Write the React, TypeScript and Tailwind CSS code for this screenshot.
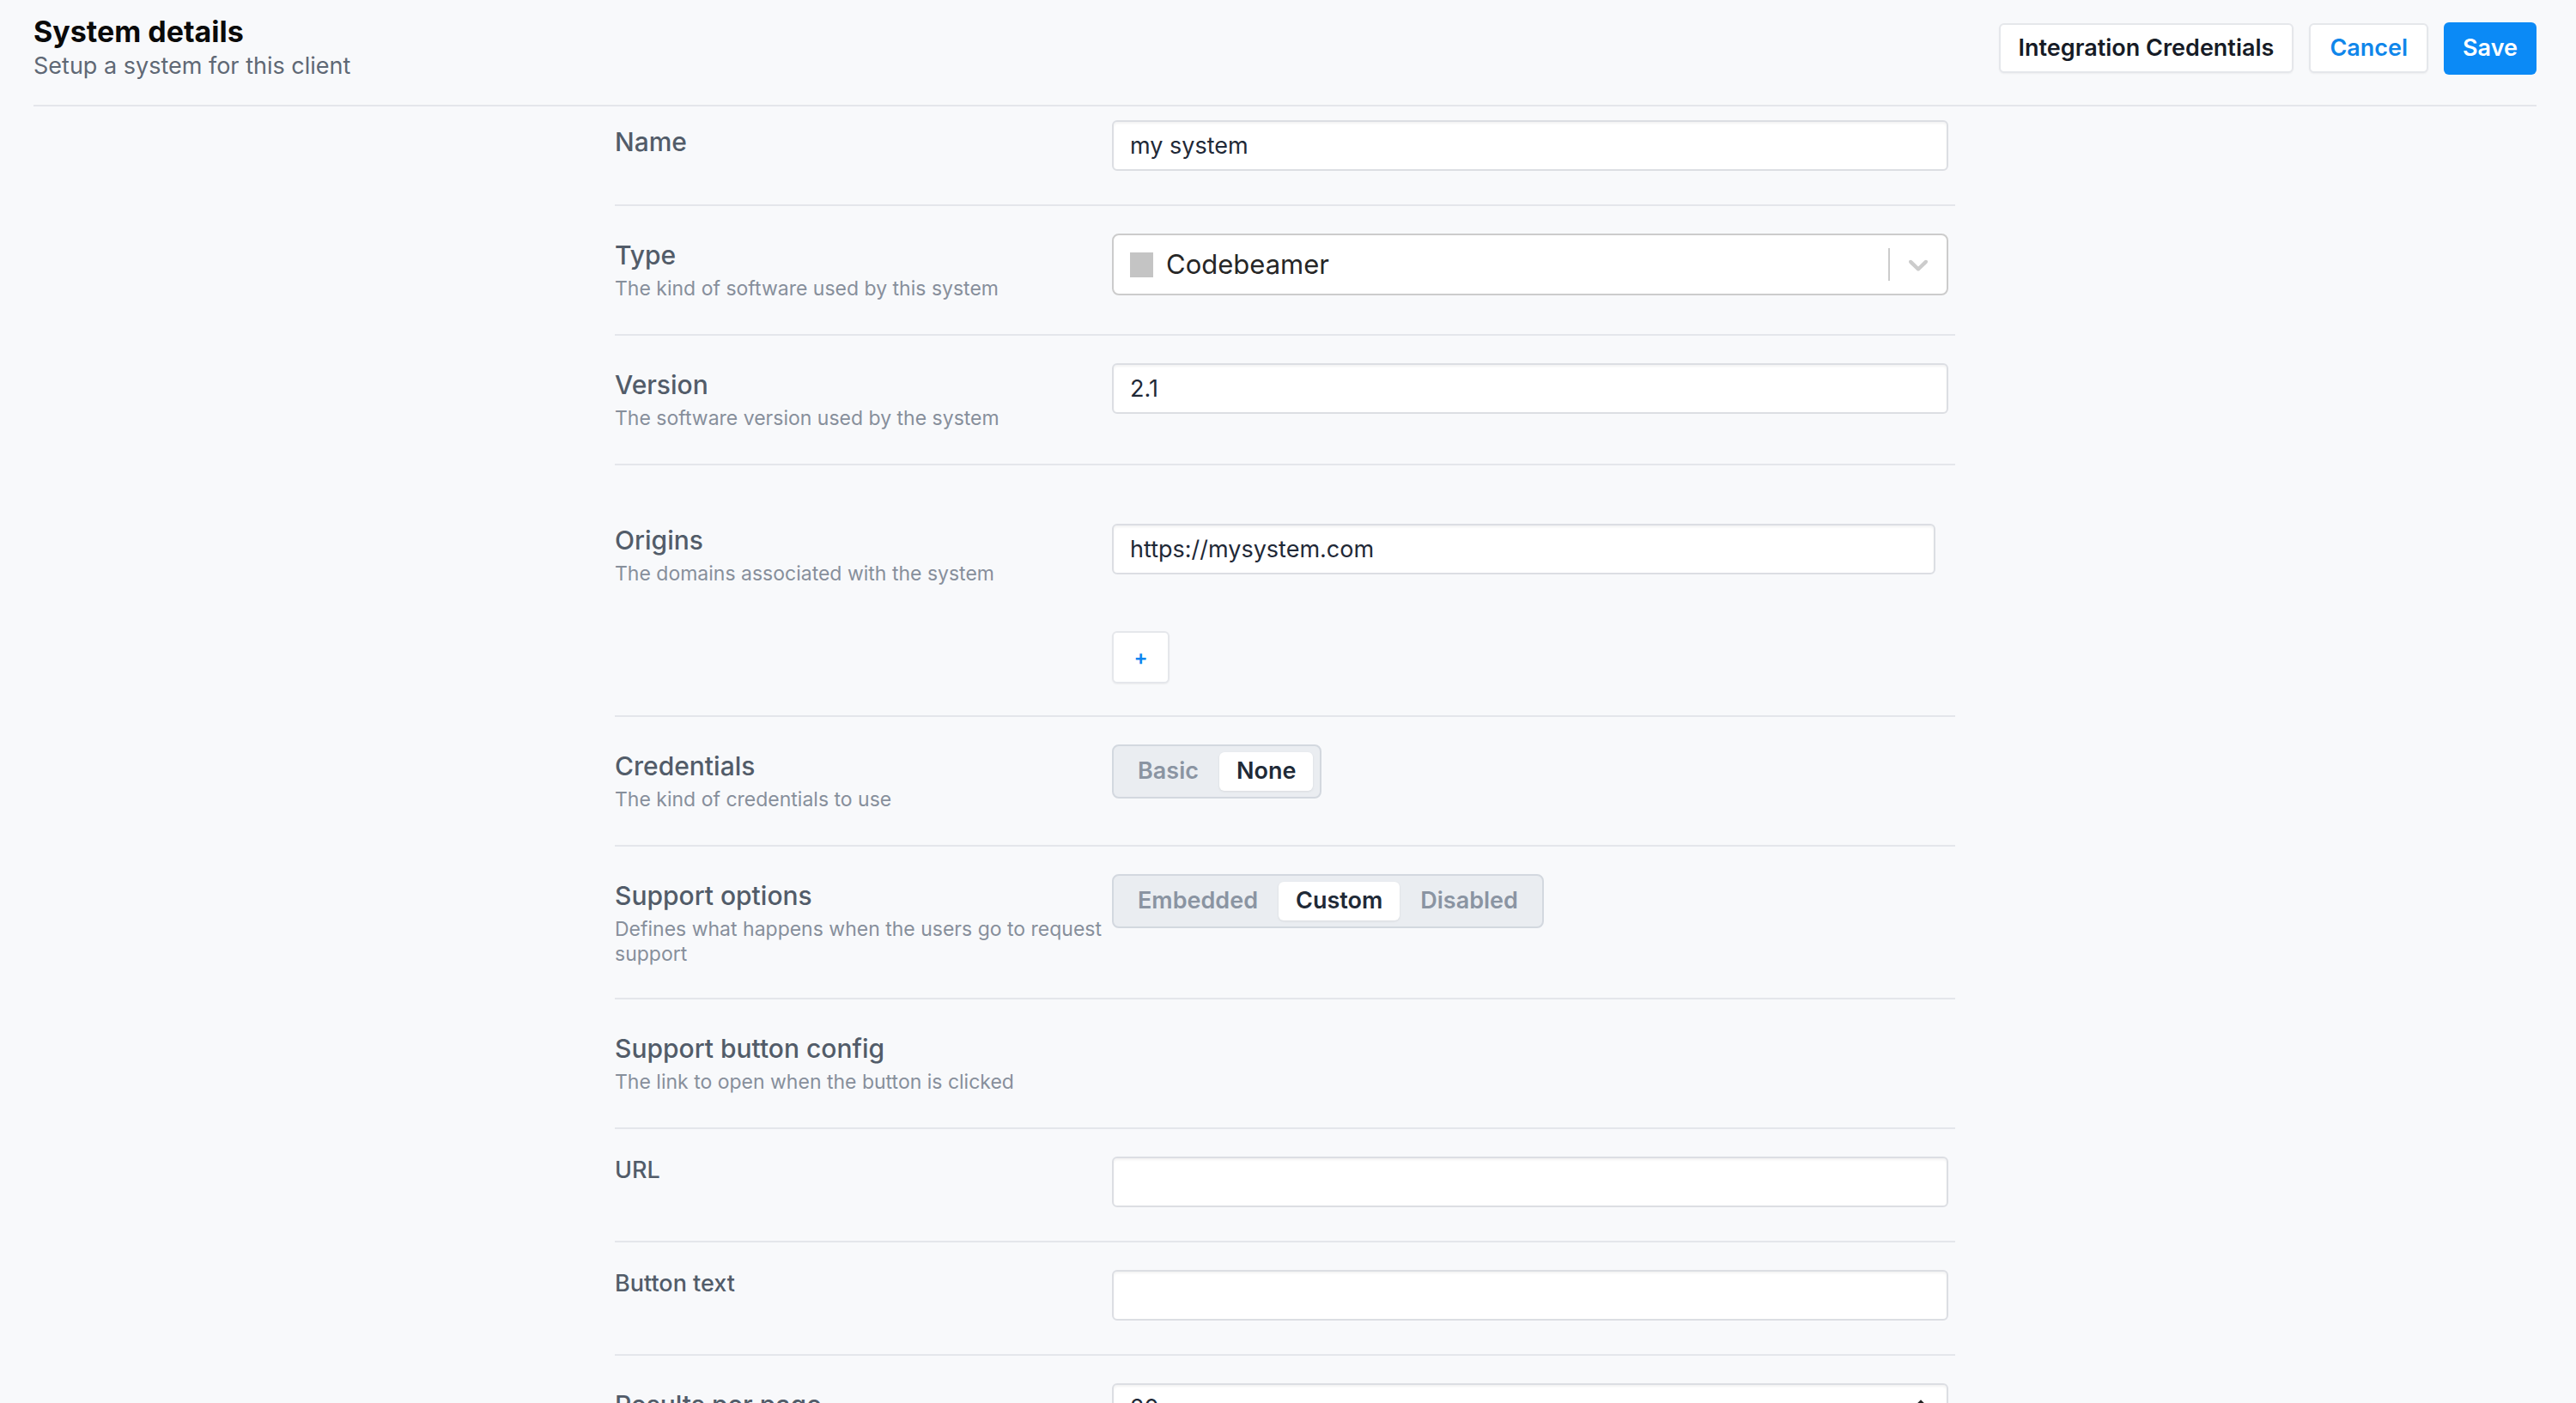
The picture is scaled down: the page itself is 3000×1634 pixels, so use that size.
import React from 'react'

const inputCls =
  'h-[59px] w-full rounded-[6px] border-2 border-[#dcdee3] bg-white px-[19px] text-[27px] text-[#1f2937] shadow-[inset_0_2px_3px_rgba(0,0,0,0.05)] outline-none'

interface FieldProps {
  label: string
  desc?: string
  sub?: boolean
  className?: string
  children?: React.ReactNode
}

function Field({ label, desc, sub, className, children }: FieldProps) {
  return (
    <div
      className={
        'grid grid-cols-[579px_974px] border-b-2 border-[#e4e6eb] ' +
        (className ?? (sub ? 'pt-[32px] pb-[39px]' : 'pt-[32px] pb-[38px]'))
      }
    >
      <div>
        {sub ? (
          <div className="text-[27px] leading-[32px] font-medium text-[#525c69]">{label}</div>
        ) : (
          <div className="text-[30px] leading-[50px] font-medium text-[#525c69]">{label}</div>
        )}
        {desc && <div className="pr-[10px] text-[23px] leading-[29px] text-[#878f9b]">{desc}</div>}
      </div>
      <div>{children}</div>
    </div>
  )
}

function Segmented({ options, active }: { options: string[]; active: string }) {
  return (
    <div className="inline-flex gap-[4px] rounded-[8px] border-2 border-[#d3d8df] bg-[#eaedf1] px-[8px] py-[7px]">
      {options.map((o) => (
        <div
          key={o}
          className={
            o === active
              ? 'flex h-[45px] items-center rounded-[6px] bg-white px-[20px] text-[27px] font-semibold text-[#1f2a37] shadow-[0_1px_3px_rgba(0,0,0,0.08)]'
              : 'flex h-[45px] items-center rounded-[6px] px-[20px] text-[27px] font-semibold text-[#8a94a2]'
          }
        >
          {o}
        </div>
      ))}
    </div>
  )
}

function Chevron() {
  return (
    <svg width="38" height="38" viewBox="0 0 20 20" fill="#cccccc">
      <path d="M4.516 7.548c0.436-0.446 1.043-0.481 1.576 0l3.908 3.747 3.908-3.747c0.533-0.481 1.141-0.446 1.574 0 0.436 0.445 0.408 1.197 0 1.615-0.406 0.418-4.695 4.502-4.695 4.502-0.217 0.223-0.502 0.335-0.787 0.335s-0.57-0.112-0.789-0.335c0 0-4.287-4.084-4.695-4.502s-0.436-1.17 0-1.615z" />
    </svg>
  )
}

export default function App() {
  return (
    <div className="h-screen overflow-hidden bg-[#f8f9fb] pl-[39px] pr-[46px] font-['Inter',sans-serif]">
      <header className="flex items-center justify-between border-b-2 border-[#e4e6eb] pt-[17px] pb-[27px]">
        <div>
          <h1 className="text-[34px] leading-[40px] font-bold text-[#0a0a0a]">System details</h1>
          <p className="mt-[2px] text-[27px] leading-[36px] text-[#5f6875]">Setup a system for this client</p>
        </div>
        <div className="flex items-center gap-[18px]">
          <button className="h-[58px] rounded-[6px] border-2 border-[#e5e7eb] bg-white px-[21px] text-[27px] font-semibold text-[#161b26] shadow-[0_1px_2px_rgba(0,0,0,0.05)]">
            Integration Credentials
          </button>
          <button className="h-[58px] rounded-[6px] border-2 border-[#e5e7eb] bg-white px-[22px] text-[27px] font-semibold text-[#0f86ea] shadow-[0_1px_2px_rgba(0,0,0,0.05)]">
            Cancel
          </button>
          <button className="h-[61px] rounded-[6px] bg-[#0b8af6] px-[22px] text-[27px] font-semibold text-white">
            Save
          </button>
        </div>
      </header>

      <div className="mx-auto w-[1561px]">
        <Field label="Name" className="pt-[16px] pb-[39px]">
          <input className={inputCls} readOnly value="my system" />
        </Field>

        <Field label="Type" desc="The kind of software used by this system">
          <div className="flex h-[72px] items-center rounded-[8px] border-2 border-[#cccccc] bg-white">
            <div className="flex flex-1 items-center pl-[19px]">
              <span className="h-[29px] w-[27px] bg-[#c4c4c4]" />
              <span className="ml-[15px] text-[31px] text-[#262626]">Codebeamer</span>
            </div>
            <span className="h-[38px] w-[2px] bg-[#cccccc]" />
            <div className="flex items-center px-[14px]">
              <Chevron />
            </div>
          </div>
        </Field>

        <Field label="Version" desc="The software version used by the system">
          <input className={inputCls} readOnly value="2.1" />
        </Field>

        <Field label="Origins" desc="The domains associated with the system" className="pt-[62px] pb-[37px]">
          <div className="pt-[6px]">
            <div className="w-[959px]">
              <input className={inputCls} readOnly value="https://mysystem.com" />
            </div>
            <button className="mt-[66px] flex h-[61px] w-[67px] items-center justify-center rounded-[6px] border-2 border-[#e5e7eb] bg-white text-[24px] font-semibold text-[#0b86f0] shadow-[0_1px_2px_rgba(0,0,0,0.05)]">
              +
            </button>
          </div>
        </Field>

        <Field label="Credentials" desc="The kind of credentials to use">
          <Segmented options={['Basic', 'None']} active="None" />
        </Field>

        <Field
          label="Support options"
          desc="Defines what happens when the users go to request support"
          className="pt-[32px] pb-[36px]"
        >
          <Segmented options={['Embedded', 'Custom', 'Disabled']} active="Custom" />
        </Field>

        <Field label="Support button config" desc="The link to open when the button is clicked" />

        <Field label="URL" sub>
          <input className={inputCls} readOnly value="" />
        </Field>

        <Field label="Button text" sub>
          <input className={inputCls} readOnly value="" />
        </Field>

        <Field label="Results per page">
          <div className="flex h-[59px] w-full items-center justify-between rounded-[6px] border-2 border-[#dcdee3] bg-white px-[19px] text-[27px] text-[#1f2937] shadow-[inset_0_2px_3px_rgba(0,0,0,0.05)]">
            <span>20</span>
            <svg width="22" height="34" viewBox="0 0 22 34" fill="none" stroke="#222" strokeWidth="2.5">
              <path d="M6 13l5-5 5 5" />
              <path d="M6 21l5 5 5-5" />
            </svg>
          </div>
        </Field>
      </div>
    </div>
  )
}
